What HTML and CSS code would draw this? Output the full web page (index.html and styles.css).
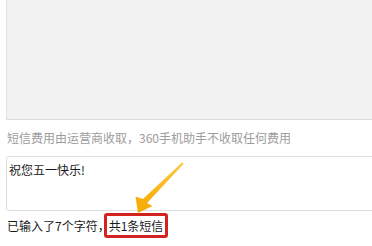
FILE: index.html
```html
<!DOCTYPE html>
<html lang="zh-CN">
<head>
<meta charset="utf-8">
<link rel="stylesheet" href="styles.css">
</head>
<body>
<div class="wrap">
  <div class="panel"></div>
  <p class="note">短信费用由运营商收取，360手机助手不收取任何费用</p>
  <div class="msg">祝您五一快乐!</div>
  <div class="count">
    <span class="typed">已输入了7个字符，</span>
    <span class="total">共1条短信</span>
  </div>
  <svg class="arrow" width="372" height="246" viewBox="0 0 372 246" aria-hidden="true">
    <defs>
      <linearGradient id="g" x1="183" y1="163" x2="138" y2="213" gradientUnits="userSpaceOnUse">
        <stop offset="0" stop-color="#fcc845"/>
        <stop offset="1" stop-color="#f5aa00"/>
      </linearGradient>
    </defs>
    <polygon fill="url(#g)" points="182.3,162.3 142.9,198.9 135.5,196.5 138,213 152.5,206 147.1,203.1 183.7,163.7"/>
  </svg>
</div>
</body>
</html>
```

FILE: styles.css
```css
html, body {
  margin: 0;
  padding: 0;
  background: #ffffff;
}
.wrap {
  position: relative;
  width: 372px;
  height: 246px;
  overflow: hidden;
  padding-left: 6px;
  box-sizing: border-box;
  font-family: "Noto Sans CJK SC", "Noto Sans", sans-serif;
  font-size: 12px;
  color: #222;
}
.panel {
  height: 119px;
  margin-right: -4px;
  background: #f2f2f2;
  border-left: 1px solid #e2e2e2;
  border-bottom: 1px solid #dcdcdc;
}
.note {
  margin: 10px 0 0 1px;
  height: 16px;
  line-height: 16px;
  color: #9c9c9c;
}
.msg {
  margin-top: 10px;
  margin-right: -4px;
  height: 55px;
  box-sizing: border-box;
  border: 1px solid #dedede;
  border-radius: 3px;
  padding: 5px 2px;
  line-height: 16px;
  color: #1a1a1a;
}
.count {
  display: flex;
  align-items: center;
  margin-top: 2px;
  height: 25px;
  padding-left: 1px;
  color: #1a1a1a;
}
.total {
  margin-left: -6px;
  height: 25px;
  box-sizing: border-box;
  border: 3px solid #d3231f;
  border-radius: 3px;
  padding: 0 2px;
  line-height: 19px;
}
.arrow {
  position: absolute;
  left: 0;
  top: 0;
  pointer-events: none;
}
```
